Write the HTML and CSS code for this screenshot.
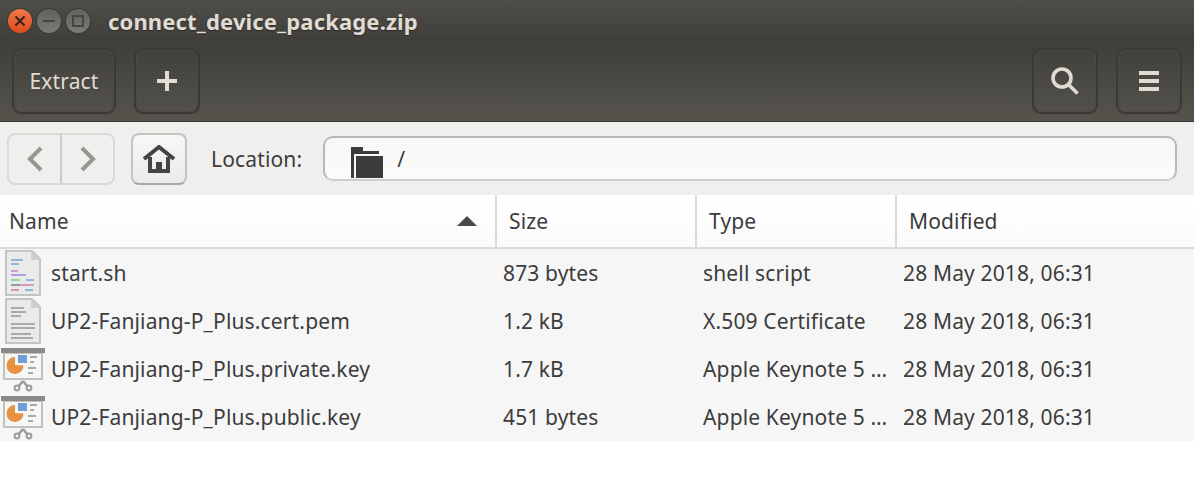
FILE: index.html
```html
<!DOCTYPE html>
<html lang="en">
<head>
  <meta charset="UTF-8">
  <title>connect_device_package.zip</title>
  <link rel="stylesheet" href="styles.css">
</head>
<body>
  <div class="titlebar">
    <div class="win-btn close"><svg width="14" height="14" viewBox="0 0 14 14"><path d="M2.5 2.5l9 9M11.5 2.5l-9 9" stroke="#3a2018" stroke-width="2"/></svg></div>
    <div class="win-btn"><svg width="14" height="14" viewBox="0 0 14 14"><path d="M1 7h12" stroke="#46453f" stroke-width="2"/></svg></div>
    <div class="win-btn"><svg width="14" height="14" viewBox="0 0 14 14"><rect x="2" y="2" width="10" height="10" fill="none" stroke="#46453f" stroke-width="2"/></svg></div>
    <div class="title">connect_device_package.zip</div>
  </div>

  <div class="toolbar">
    <button class="tool-btn extract">Extract</button>
    <button class="tool-btn square"><svg width="20" height="20" viewBox="0 0 20 20"><path d="M10 0v20M0 10h20" stroke="#e0dcd4" stroke-width="4"/></svg></button>
    <div class="spacer"></div>
    <button class="tool-btn square"><svg width="28" height="28" viewBox="0 0 28 28"><circle cx="11" cy="11" r="9" fill="none" stroke="#dfdbd2" stroke-width="3.6"/><path d="M17.5 17.5l9 9" stroke="#dfdbd2" stroke-width="3.6"/></svg></button>
    <button class="tool-btn square"><svg width="20" height="20" viewBox="0 0 20 20"><path d="M0 2h20M0 10h20M0 18h20" stroke="#e0dcd4" stroke-width="4"/></svg></button>
  </div>

  <div class="locationbar">
    <div class="nav-group">
      <div class="nav-btn"><svg width="18" height="26" viewBox="0 0 18 26"><path d="M15 2L4 13l11 11" fill="none" stroke="#97958f" stroke-width="4"/></svg></div>
      <div class="nav-btn next"><svg width="18" height="26" viewBox="0 0 18 26"><path d="M3 2l11 11L3 24" fill="none" stroke="#97958f" stroke-width="4"/></svg></div>
    </div>
    <div class="home-btn"><svg width="34" height="28" viewBox="0 0 34 28"><path d="M2 14L17 2l15 12" fill="none" stroke="#444" stroke-width="4"/><path d="M8 12v14h18V12" fill="none" stroke="#444" stroke-width="4"/><path d="M14 17h6v9h-6z" fill="#444"/></svg></div>
    <span class="loc-label">Location:</span>
    <div class="loc-entry">
      <svg width="32" height="31" viewBox="0 0 32 31"><path d="M0 0h12v4h16v3H3v24H0z" fill="#3c3c3c"/><path d="M5 9h27v22H5z" fill="#3c3c3c"/></svg>
      <span class="loc-path">/</span>
    </div>
  </div>

  <div class="list-head">
    <div class="head-cell name-head">Name<svg width="20" height="10" viewBox="0 0 20 10"><path d="M10 0l10 10H0z" fill="#4a4a48"/></svg></div>
    <div class="head-cell">Size</div>
    <div class="head-cell">Type</div>
    <div class="head-cell">Modified</div>
  </div>

  <div class="row">
    <div class="name-cell">
      <svg class="icon" width="46" height="48" viewBox="0 0 46 48">
        <path d="M6 2h26l8 8v36H6z" fill="#e9eaea" stroke="#c4c4c2" stroke-width="2"/>
        <path d="M31 2v9h9z" fill="#cfcfcd"/>
        <path d="M11 11h12" stroke="#8fb6d8" stroke-width="2"/><path d="M11 15h8" stroke="#8fb6d8" stroke-width="2"/>
        <path d="M11 22h7" stroke="#cf9ad6" stroke-width="2"/><path d="M11 26h15" stroke="#b29ce0" stroke-width="2"/>
        <path d="M11 31h9" stroke="#98d492" stroke-width="2"/><path d="M26 31h8" stroke="#8fb6d8" stroke-width="2"/>
        <path d="M11 36h9" stroke="#999" stroke-width="2"/><path d="M20 36h14" stroke="#d69cc2" stroke-width="2"/>
        <path d="M11 41h8" stroke="#e09696" stroke-width="2"/><path d="M25 41h8" stroke="#8fb6d8" stroke-width="2"/>
      </svg>
      <span>start.sh</span>
    </div>
    <div>873 bytes</div><div>shell script</div><div>28 May 2018, 06:31</div>
  </div>
  <div class="row">
    <div class="name-cell">
      <svg class="icon" width="46" height="48" viewBox="0 0 46 48">
        <path d="M6 2h26l8 8v36H6z" fill="#e9eaea" stroke="#c4c4c2" stroke-width="2"/>
        <path d="M31 2v9h9z" fill="#cfcfcd"/>
        <path d="M11 11h13M11 15h15M11 19h10M11 27h24M11 31h24M11 37h20M11 41h22" stroke="#aaaaa8" stroke-width="2"/>
      </svg>
      <span>UP2-Fanjiang-P_Plus.cert.pem</span>
    </div>
    <div>1.2 kB</div><div>X.509 Certificate</div><div>28 May 2018, 06:31</div>
  </div>
  <div class="row">
    <div class="name-cell">
      <svg class="icon" width="46" height="48" viewBox="0 0 46 48">
        <use href="#keynote"/>
      </svg>
      <span>UP2-Fanjiang-P_Plus.private.key</span>
    </div>
    <div>1.7 kB</div><div>Apple Keynote 5 …</div><div>28 May 2018, 06:31</div>
  </div>
  <div class="row">
    <div class="name-cell">
      <svg class="icon" width="46" height="48" viewBox="0 0 46 48">
        <use href="#keynote"/>
      </svg>
      <span>UP2-Fanjiang-P_Plus.public.key</span>
    </div>
    <div>451 bytes</div><div>Apple Keynote 5 …</div><div>28 May 2018, 06:31</div>
  </div>

  <svg class="defs" width="0" height="0">
    <defs>
      <g id="keynote">
        <path d="M4 8h38v26H4z" fill="#f6f6f4" stroke="#c0c0bc" stroke-width="2"/>
        <path d="M1 3h44v5H1z" fill="#8a8a86"/>
        <path d="M15 20v-8a8.5 8.5 0 1 0 8.5 8.5z" fill="#e8913f"/>
        <path d="M18 10h9v8h-9z" fill="#6f9fd8"/>
        <path d="M30 12h7M30 17h4M28 23h8M28 28h5" stroke="#a8a8a4" stroke-width="2"/>
        <path d="M23 36l-5 6M23 36l5 6" fill="none" stroke="#9c9c98" stroke-width="2.5"/>
        <circle cx="17" cy="43" r="2.4" fill="none" stroke="#9c9c98" stroke-width="2"/>
        <circle cx="29" cy="43" r="2.4" fill="none" stroke="#9c9c98" stroke-width="2"/>
      </g>
    </defs>
  </svg>
</body>
</html>
```

FILE: styles.css
```css
* {
  box-sizing: border-box;
}
body {
  margin: 0;
  width: 1194px;
  height: 480px;
  overflow: hidden;
  background-color: #fff;
  font-family: "Noto Sans", sans-serif;
  font-size: 21px;
  letter-spacing: 0.15px;
  color: #3c3c3c;
}
svg {
  display: block;
}
.defs {
  position: absolute;
}
.titlebar {
  display: flex;
  align-items: center;
  height: 41px;
  padding: 0 0 0 8px;
  gap: 5px;
  background: linear-gradient(#504e49, #3f3e3a);
}
.win-btn {
  display: flex;
  align-items: center;
  justify-content: center;
  width: 24px;
  height: 24px;
  border-radius: 50%;
  background: linear-gradient(#62615c, #7c7a74);
  box-shadow: 0 0 0 1px #3a3935;
}
.win-btn.close {
  background: linear-gradient(#f0794b, #dd4c1e);
}
.title {
  margin-left: 13px;
  font-size: 22px;
  font-weight: 700;
  color: #e0dcd4;
  text-shadow: 0 1px 1px #2a2a28;
}
.toolbar {
  display: flex;
  align-items: center;
  height: 81px;
  padding: 0 12px;
  gap: 18px;
  background: linear-gradient(#3f3e39, #55534c);
  border-bottom: 1px solid #3a3935;
}
.spacer {
  flex: 1;
}
.tool-btn {
  display: flex;
  align-items: center;
  justify-content: center;
  height: 66px;
  padding: 0;
  background: transparent;
  border: 2px solid #3a3935;
  border-radius: 9px;
  box-shadow: inset 0 0 0 1px #4a4944;
  font-family: inherit;
  font-size: 21px;
  letter-spacing: inherit;
  color: #e0dcd4;
}
.extract {
  width: 104px;
}
.square {
  width: 66px;
}
.locationbar {
  display: flex;
  align-items: center;
  height: 73px;
  padding: 0 17px 0 7px;
  background-color: #f0efed;
}
.nav-group {
  display: flex;
  width: 108px;
  height: 52px;
  border: 2px solid #dad9d6;
  border-radius: 8px;
  background-color: #f0efed;
}
.nav-btn {
  width: 51px;
  display: flex;
  align-items: center;
  justify-content: center;
}
.nav-btn.next {
  flex: 1;
  border-left: 2px solid #cdccc9;
}
.home-btn {
  display: flex;
  align-items: center;
  justify-content: center;
  width: 56px;
  height: 52px;
  margin-left: 16px;
  border: 2px solid #c4c3bf;
  border-bottom-color: #a9a8a4;
  border-radius: 8px;
  background: linear-gradient(#f8f7f6, #eceae8);
}
.loc-label {
  margin-left: 24px;
}
.loc-entry {
  flex: 1;
  display: flex;
  align-items: center;
  height: 45px;
  margin-left: 21px;
  padding-left: 26px;
  gap: 14px;
  border: 2px solid #b8b7b4;
  border-bottom-color: #cfcecb;
  border-radius: 10px;
  background: linear-gradient(#f7f7f6, #fbfbfb);
}
.loc-entry svg {
  margin-top: 8px;
}
.list-head {
  display: grid;
  grid-template-columns: 495px 200px 200px 1fr;
  height: 54px;
  background: linear-gradient(#fff, #fbfbfb);
  border-bottom: 2px solid #dcdad7;
}
.head-cell {
  display: flex;
  align-items: center;
  justify-content: space-between;
  padding: 0 18px 0 12px;
  border-left: 2px solid #dcdad7;
}
.name-head {
  padding-left: 9px;
  border-left: none;
}
.row {
  display: grid;
  grid-template-columns: 496px 200px 200px 1fr;
  align-items: center;
  height: 48px;
  background-color: #f6f6f6;
}
.row > div {
  padding-left: 7px;
  white-space: nowrap;
}
.row > .name-cell {
  display: flex;
  align-items: center;
  padding-left: 0;
}
.icon {
  flex: none;
  margin-right: 5px;
  filter: blur(0.6px);
}
```
